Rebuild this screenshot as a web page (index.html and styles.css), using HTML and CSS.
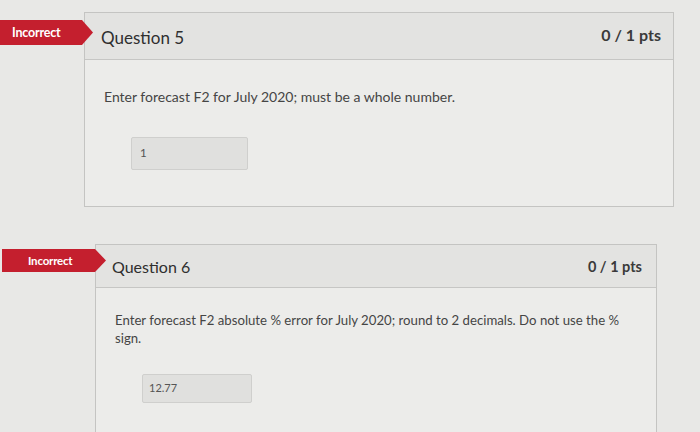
FILE: index.html
```html
<!DOCTYPE html>
<html>
<head>
<meta charset="utf-8">
<link rel="stylesheet" href="styles.css">
</head>
<body>
<div class="page">
  <div class="question q5">
    <div class="badge">Incorrect</div>
    <div class="header">
      <span class="title">Question 5</span>
      <span class="pts">0 / 1 pts</span>
    </div>
    <div class="content">
      <p class="text">Enter forecast F2 for July 2020; must be a whole number.</p>
      <div class="answer">1</div>
    </div>
  </div>

  <div class="question q6">
    <div class="badge">Incorrect</div>
    <div class="header">
      <span class="title">Question 6</span>
      <span class="pts">0 / 1 pts</span>
    </div>
    <div class="content">
      <p class="text">Enter forecast F2 absolute % error for July 2020; round to 2 decimals. Do not use the % sign.</p>
      <div class="answer">12.77</div>
    </div>
  </div>
</div>
</body>
</html>
```

FILE: styles.css
```css
html, body {
  margin: 0;
  padding: 0;
}
body {
  background: #e8e8e6;
  font-family: Lato, "Open Sans", sans-serif;
  color: #3a3a3a;
  width: 700px;
  height: 432px;
  overflow: hidden;
}
.page {
  display: flex;
  flex-direction: column;
  padding-top: 12px;
  gap: 37px;
}
.question {
  position: relative;
  border: 1px solid #c4c4c2;
  background: #ececea;
}
.header {
  display: flex;
  justify-content: space-between;
  align-items: center;
  background: #e3e3e1;
  border-bottom: 1px solid #c6c6c4;
  box-sizing: border-box;
}
.title {
  color: #2f2f2f;
}
.pts {
  font-weight: 700;
  color: #3a3a3a;
}
.text {
  margin: 0;
  color: #454545;
}
.answer {
  box-sizing: border-box;
  background: #e0e0de;
  border: 1px solid #cfcfcd;
  border-radius: 2px;
  color: #555;
}
.badge {
  position: absolute;
  background: #c41f2e;
  color: #fff;
  font-weight: 700;
  box-sizing: border-box;
  clip-path: polygon(0 0, calc(100% - 11px) 0, 100% 50%, calc(100% - 11px) 100%, 0 100%);
  display: flex;
  align-items: center;
  letter-spacing: -0.2px;
}

/* Question 5 */
.q5 {
  margin-left: 84px;
  width: 588px;
  height: 193px;
}
.q5 .header {
  height: 47px;
  padding: 2px 12px 0 16px;
}
.q5 .title {
  font-size: 17px;
}
.q5 .pts {
  font-size: 16px;
  margin-top: -6px;
}
.q5 .content {
  padding: 28px 0 0 19px;
}
.q5 .text {
  font-size: 14px;
  line-height: 18px;
}
.q5 .answer {
  margin: 31px 0 0 27px;
  width: 117px;
  height: 33px;
  padding: 8px 0 0 8px;
  font-size: 11.5px;
}
.q5 .badge {
  left: -85px;
  top: 7px;
  width: 93px;
  height: 25px;
  padding-left: 12px;
  font-size: 12.5px;
}

/* Question 6 */
.q6 {
  margin-left: 95px;
  width: 560px;
  height: 220px;
}
.q6 .header {
  height: 43px;
  padding: 0 14px 0 16px;
}
.q6 .title {
  font-size: 16px;
}
.q6 .pts {
  font-size: 14.5px;
}
.q6 .content {
  padding: 23px 0 0 19px;
}
.q6 .text {
  font-size: 13.2px;
  line-height: 18px;
  width: 512px;
}
.q6 .answer {
  margin: 27px 0 0 27px;
  width: 110px;
  height: 29px;
  padding: 6px 0 0 6px;
  font-size: 11px;
}
.q6 .badge {
  left: -94px;
  top: 4px;
  width: 104px;
  height: 23px;
  padding-left: 26px;
  font-size: 11.5px;
}
```
